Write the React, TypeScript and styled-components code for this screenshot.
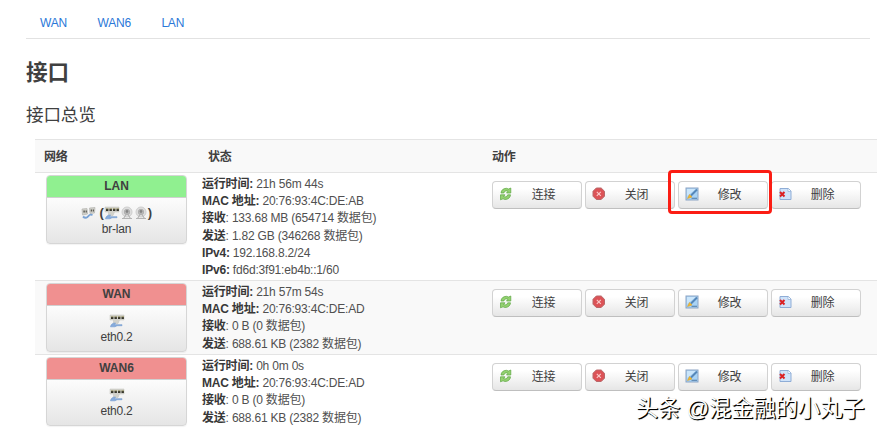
import React from 'react';
import styled, { createGlobalStyle } from 'styled-components';

const GlobalStyle = createGlobalStyle`
  * {
    box-sizing: border-box;
  }

  body {
    margin: 0;
    background-color: #fff;
    color: #404040;
    font-family: "Liberation Sans", "Noto Sans CJK SC", sans-serif;
    font-size: 12px;
    letter-spacing: -0.2px;
    line-height: 17.2px;
    overflow: hidden;
  }
`;

const StyledPage = styled.div`
  position: relative;
  width: 877px;
  height: 434px;
  overflow: hidden;
`;

const StyledTabs = styled.nav`
  display: flex;
  gap: 30.5px;
  height: 39px;
  margin: 0 7px 0 26px;
  padding: 15px 14px 0;
  border-bottom: 1px solid #e2e2e2;

  & a {
    color: #2a78d8;
    text-decoration: none;
  }
`;

const StyledTitle = styled.h2`
  margin: 16px 0 0 26px;
  font-size: 21.6px;
  line-height: 36px;
`;

const StyledLegend = styled.h3`
  margin: 9px 0 0 26px;
  font-size: 17.6px;
  font-weight: normal;
  line-height: 30px;
`;

const StyledTable = styled.div`
  margin: 9px 0 0 35px;
`;

const StyledRow = styled.div<{ shaded?: boolean; height: number }>`
  display: grid;
  grid-template-columns: 158px 290px 1fr;
  height: ${props => props.height}px;
  border-top: 1px solid #e4e4e4;
  background-color: ${props => props.shaded ? '#f9f9f9' : '#fff'};
`;

const StyledHeading = styled.div<{ indent: number }>`
  padding: 9px 0 0 ${props => props.indent}px;
  font-weight: bold;
`;

const StyledCard = styled.div`
  width: 141px;
  height: 69px;
  margin: 2px 0 0 11px;
  border: 1px solid #d6d6d6;
  border-radius: 4px;
  background-image: linear-gradient(#fff 25%, #e5e5e5);
  box-shadow: 0 1px 1px rgba(0, 0, 0, 0.05);
  text-align: center;
  overflow: hidden;
`;

const StyledCardHead = styled.div<{ up: boolean }>`
  height: 22px;
  border-bottom: 1px solid #d0d0d0;
  background-color: ${props => props.up ? '#90f090' : '#f09090'};
  font-weight: bold;
  letter-spacing: 0;
  line-height: 21px;
`;

const StyledDevices = styled.div`
  display: flex;
  align-items: center;
  justify-content: center;
  height: 17px;
  margin-top: 6px;
  font-size: 13px;
  font-weight: bold;
`;

const StyledStatus = styled.div`
  padding: 3px 0 0 9px;
  color: #505050;
  white-space: nowrap;

  & b {
    color: #383838;
  }
`;

const StyledActions = styled.div`
  display: flex;
  gap: 3px;
  padding: 8px 0 0 9px;
`;

const StyledButton = styled.button`
  position: relative;
  flex: none;
  width: 90px;
  height: 28px;
  padding: 2px 0 0 13px;
  border: 1px solid #d2d2d2;
  border-bottom-color: #bfbfbf;
  border-radius: 4px;
  background-image: linear-gradient(#fff 25%, #e6e6e6);
  color: #404040;
  font: inherit;
  letter-spacing: inherit;
  text-align: center;

  & svg {
    position: absolute;
    left: 6px;
    top: 5px;
  }
`;

const StyledHighlight = styled.div`
  position: absolute;
  left: 668px;
  top: 170px;
  width: 104px;
  height: 44px;
  border: 3px solid #fb1d14;
  border-radius: 4px;
`;

const StyledWatermark = styled.div`
  position: absolute;
  left: 636px;
  top: 393px;
  color: #fff;
  font-size: 22.3px;
  letter-spacing: -0.1px;
  line-height: 32px;
  text-shadow: 1px 1px 0 #000, 1px 1px 1px #000;
  white-space: nowrap;
`;

const ReloadIcon = () => (
    <svg width="14" height="14" viewBox="0 0 14 14">
        <path d="M2 6C2.200 3 4.500 1.300 7.500 1.300L9.500 2 11.800 1V6H7.500L9 4.300C7 3.400 5.300 4 4.800 6Z" fill="#93d170" stroke="#5ba640" strokeWidth=".7" />
        <path d="M11.500 7.800C11.300 10.800 9 12.500 6 12.500L4 11.800 1.500 12.800V7.800H6L4.500 9.500C6.500 10.400 8.200 9.800 8.700 7.800Z" fill="#93d170" stroke="#5ba640" strokeWidth=".7" />
    </svg>
);

const StopIcon = () => (
    <svg width="14" height="14" viewBox="0 0 14 14">
        <path d="M4.300 1H9.200L12.500 4.300V9.200L9.200 12.500H4.300L1 9.200V4.300Z" fill="#dc5357" stroke="#b8686a" />
        <path d="M4.800 4.800L8.800 8.800M8.800 4.800L4.800 8.800" stroke="#fbcccc" strokeWidth="1.100" />
    </svg>
);

const EditIcon = () => (
    <svg width="14" height="14" viewBox="0 0 14 14">
        <rect x="1" y="1" width="12" height="12" fill="#a9d3f5" stroke="#8ba4c4" />
        <path d="M2 2H11L2 9Z" fill="#cbe6fb" />
        <path d="M6.500 11.300H12" stroke="#5d86b0" strokeWidth="1.200" />
        <path d="M6 8.500L12 2.500" stroke="#5687b8" strokeWidth="2" />
        <path d="M2.500 11.500L4.500 7.500 7 10Z" fill="#f0b72d" stroke="#dba332" strokeWidth=".6" />
    </svg>
);

const DeleteIcon = () => (
    <svg width="14" height="14" viewBox="0 0 14 14">
        <path d="M2 1.500H10.500L13 4V12.500H2Z" fill="#cfe3fa" stroke="#8fadd6" />
        <path d="M10 1.500V4.500H13" fill="#fff" stroke="#8fadd6" strokeWidth=".7" />
        <path d="M2 5L6.500 9.500M6.500 5L2 9.500" stroke="#db2023" strokeWidth="2" />
    </svg>
);

const BridgeIcon = () => (
    <svg width="15" height="14" viewBox="0 0 15 14">
        <path d="M1 3L6 2.500 6.500 8 1.500 9ZM8.500 2L14 1.500 13.500 7 9 7.500Z" fill="#cfcfc9" stroke="#b4b4b0" strokeWidth=".7" />
        <path d="M2.500 5.500H3.700M4.700 5.500H5.700M9.800 4.500H10.800M11.800 4.500H12.800" stroke="#3f3f38" strokeWidth="1.800" />
        <path d="M2 10.500C4 12.500 6 12 7.500 10S9.500 8.300 11.500 9" fill="none" stroke="#7aa3d5" strokeWidth="1.900" />
    </svg>
);

const EthernetIcon = () => (
    <svg width="16" height="14" viewBox="0 0 16 14">
        <path d="M1 1H15V6H10.500L9 9.500H4.500V6H1Z" fill="#d2d2cc" stroke="#c0c0bb" strokeWidth=".5" />
        <path d="M2 3.800H15" stroke="#34342c" strokeWidth="2.200" strokeDasharray="2.400 1.100" />
        <path d="M2 2.800H15" stroke="#a89f55" strokeWidth=".6" strokeDasharray="2.400 1.100" />
        <path d="M1.500 12.800C2 10 4 9 6.500 9L5.500 10.700H13V11.700H8L6 12.800Z" fill="#86abdc" stroke="#7aa0d2" strokeWidth=".7" />
    </svg>
);

const WifiIcon = () => (
    <svg width="14" height="14" viewBox="0 0 14 14">
        <circle cx="7" cy="6" r="5" fill="#dedede" stroke="#cecece" />
        <circle cx="7" cy="6" r="2.700" fill="#bdbdbd" stroke="#b0b0b0" />
        <path d="M7 7L3.500 12.500M7 7L10.500 12.500M2 12.500H12" fill="none" stroke="#b3b3b3" strokeWidth="1.100" />
        <circle cx="7" cy="5.500" r="1.400" fill="#858585" />
    </svg>
);

interface INetwork {
    name: string;
    device: string;
    up: boolean;
    bridge?: boolean;
    height: number;
    uptime: string;
    mac: string;
    rx: string;
    tx: string;
    ipv4?: string;
    ipv6?: string;
}

const NETWORKS: INetwork[] = [
    {
        name: 'LAN', device: 'br-lan', up: true, bridge: true, height: 108, uptime: '21h 56m 44s', mac: '20:76:93:4C:DE:AB',
        rx: '133.68 MB (654714 数据包)', tx: '1.82 GB (346268 数据包)', ipv4: '192.168.8.2/24', ipv6: 'fd6d:3f91:eb4b::1/60'
    },
    {
        name: 'WAN', device: 'eth0.2', up: false, height: 74, uptime: '21h 57m 54s', mac: '20:76:93:4C:DE:AD',
        rx: '0 B (0 数据包)', tx: '688.61 KB (2382 数据包)'
    },
    {
        name: 'WAN6', device: 'eth0.2', up: false, height: 80, uptime: '0h 0m 0s', mac: '20:76:93:4C:DE:AD',
        rx: '0 B (0 数据包)', tx: '688.61 KB (2382 数据包)'
    }
];

const NetworkRow = ({ network, shaded }: { network: INetwork; shaded: boolean }) => (
    <StyledRow height={network.height} shaded={shaded}>
        <StyledCard>
            <StyledCardHead up={network.up}>{network.name}</StyledCardHead>
            <StyledDevices>
                {network.bridge
                    ? <><BridgeIcon />&nbsp;(<EthernetIcon /><WifiIcon /><WifiIcon />)</>
                    : <EthernetIcon />}
            </StyledDevices>
            {network.device}
        </StyledCard>
        <StyledStatus>
            <div><b>运行时间:</b> {network.uptime}</div>
            <div><b>MAC 地址:</b> {network.mac}</div>
            <div><b>接收</b>: {network.rx}</div>
            <div><b>发送</b>: {network.tx}</div>
            {network.ipv4 && <div><b>IPv4:</b> {network.ipv4}</div>}
            {network.ipv6 && <div><b>IPv6:</b> {network.ipv6}</div>}
        </StyledStatus>
        <StyledActions>
            <StyledButton><ReloadIcon />连接</StyledButton>
            <StyledButton><StopIcon />关闭</StyledButton>
            <StyledButton><EditIcon />修改</StyledButton>
            <StyledButton><DeleteIcon />删除</StyledButton>
        </StyledActions>
    </StyledRow>
);

const App = () => (
    <StyledPage>
        <GlobalStyle />
        <StyledTabs>
            <a href="#wan">WAN</a>
            <a href="#wan6">WAN6</a>
            <a href="#lan">LAN</a>
        </StyledTabs>
        <StyledTitle>接口</StyledTitle>
        <StyledLegend>接口总览</StyledLegend>
        <StyledTable>
            <StyledRow height={33} shaded>
                <StyledHeading indent={9}>网络</StyledHeading>
                <StyledHeading indent={15}>状态</StyledHeading>
                <StyledHeading indent={9}>动作</StyledHeading>
            </StyledRow>
            {NETWORKS.map((network, i) => (
                <NetworkRow key={network.name} network={network} shaded={i % 2 === 1} />
            ))}
        </StyledTable>
        <StyledHighlight />
        <StyledWatermark>头条 @混金融的小丸子</StyledWatermark>
    </StyledPage>
);

export default App;
